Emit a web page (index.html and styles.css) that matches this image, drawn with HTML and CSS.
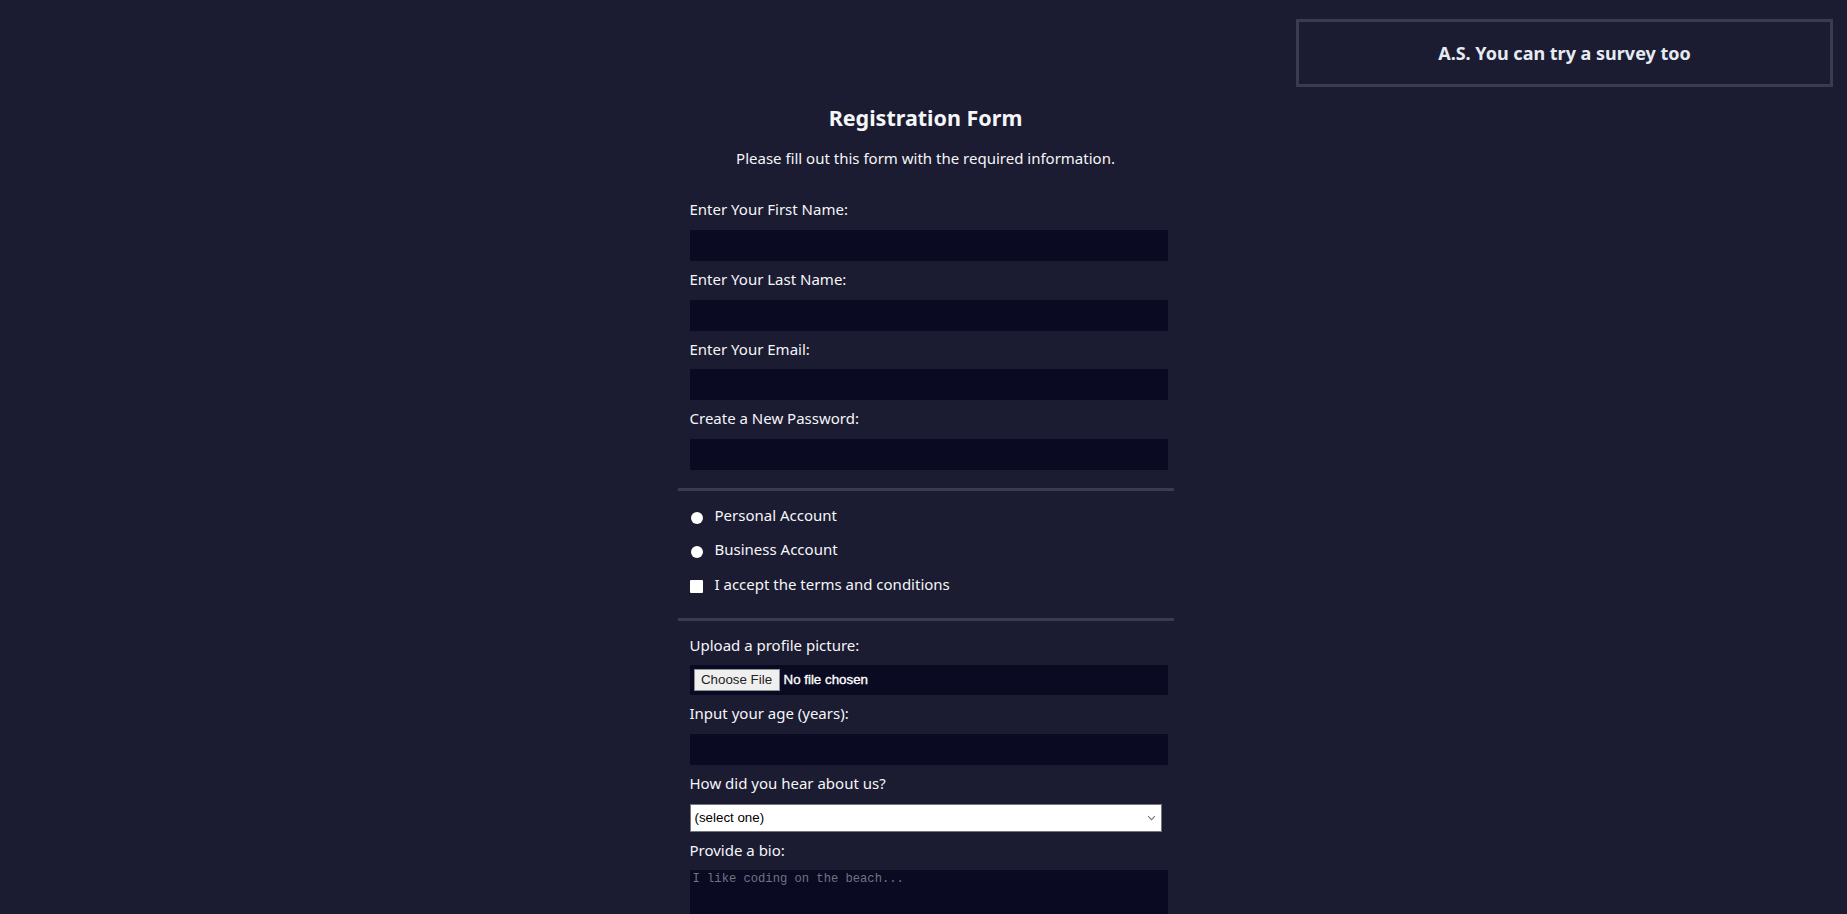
FILE: index.html
```html
<!DOCTYPE html>
<html lang="en">
<head>
<meta charset="utf-8">
<title>Registration Form</title>
<link rel="stylesheet" href="styles.css">
</head>
<body>
<header class="top">
  <div class="survey">A.S. You can try a survey too</div>
</header>
<h1 class="title">Registration Form</h1>
<p class="intro">Please fill out this form with the required information.</p>
<form class="form">
  <fieldset class="group">
    <label class="field">Enter Your First Name: <input type="text" class="control"></label>
    <label class="field">Enter Your Last Name: <input type="text" class="control"></label>
    <label class="field">Enter Your Email: <input type="email" class="control"></label>
    <label class="field">Create a New Password: <input type="password" class="control"></label>
  </fieldset>
  <fieldset class="group">
    <label class="choice"><input type="radio" name="account" class="radio"> Personal Account</label>
    <label class="choice"><input type="radio" name="account" class="radio"> Business Account</label>
    <label class="choice"><input type="checkbox" class="check"> I accept the terms and conditions</label>
  </fieldset>
  <fieldset class="group">
    <label class="field">Upload a profile picture: <input type="file" class="file"></label>
    <label class="field">Input your age (years): <input type="number" class="control"></label>
    <label class="field">How did you hear about us?
      <select class="select">
        <option value="">(select one)</option>
        <option value="1">freeCodeCamp News</option>
        <option value="2">freeCodeCamp YouTube Channel</option>
        <option value="3">freeCodeCamp Forum</option>
        <option value="4">Other</option>
      </select>
    </label>
    <label class="field">Provide a bio:
      <textarea class="bio" rows="3" cols="30" placeholder="I like coding on the beach..."></textarea>
    </label>
  </fieldset>
</form>
</body>
</html>
```

FILE: styles.css
```css
html {
  background: #1b1b32;
}

body {
  margin: 0;
  padding: 0 0 0 4px;
  background: #1b1b32;
  color: #f5f6f7;
  font-family: "Noto Sans", "Open Sans", sans-serif;
  font-size: 15px;
  line-height: 20.67px;
}

.top {
  display: flex;
  justify-content: flex-end;
  padding: 19px 14px 0 0;
}

.survey {
  box-sizing: border-box;
  width: 537px;
  height: 68px;
  border: 3px solid #3b3b4f;
  display: flex;
  align-items: center;
  justify-content: center;
  font-size: 18px;
  font-weight: 700;
  color: #e6ebf2;
}

.title {
  margin: 17px auto 0;
  text-align: center;
  font-size: 21.5px;
  line-height: 27px;
  font-weight: 700;
}

.intro {
  margin: 17px auto 17px;
  text-align: center;
}

.form {
  width: 500px;
  margin: 0 auto;
}

.group {
  margin: 0 2px;
  padding: 5.6px 12px 10px;
  border: none;
  border-bottom: 3px solid #3b3b4f;
}

.field {
  display: block;
  margin: 8px 0;
}

.control,
.file,
.bio {
  display: block;
  box-sizing: content-box;
  width: 100%;
  margin: 10px 0 0;
  padding: 1px 2px;
  background: #0a0a23;
  border: 1px solid #0a0a23;
  color: #ffffff;
}

.control {
  height: 27px;
}

.file {
  height: 26px;
  font-family: "Liberation Sans", Arial, sans-serif;
  font-size: 13.33px;
  line-height: 26px;
  -webkit-text-stroke: 0.35px #ffffff;
}

.file::file-selector-button {
  height: 22px;
  width: 86px;
  margin: 0 4px 0 1px;
  padding: 0;
  background: #efefef;
  border: 1px solid #8f8f8f;
  border-radius: 0;
  color: #222;
  -webkit-text-stroke: 0;
  font-family: "Liberation Sans", Arial, sans-serif;
  font-size: 13.33px;
}

.select {
  display: block;
  box-sizing: border-box;
  width: 100%;
  height: 28px;
  margin: 10px 0 0;
  padding: 0 24px 0 4px;
  appearance: none;
  background: #fff url("data:image/svg+xml;utf8,<svg xmlns='http://www.w3.org/2000/svg' width='9' height='6' viewBox='0 0 9 6'><path d='M1 1.2l3.5 3.5 3.5-3.5' fill='none' stroke='%23777' stroke-width='1.1'/></svg>") no-repeat right 5px center;
  border: 1px solid #767676;
  border-radius: 0;
  color: #000;
  font-family: "Liberation Sans", Arial, sans-serif;
  font-size: 13.33px;
}

.bio {
  height: 52px;
  font-family: "Liberation Mono", monospace;
  font-size: 12.15px;
  line-height: 15px;
  resize: vertical;
}

.bio::placeholder {
  color: #737382;
}

.choice {
  display: flex;
  align-items: flex-start;
  height: 26.5px;
  margin: 8px 0;
  gap: 12px;
}

.radio,
.check {
  appearance: none;
  flex: none;
  width: 12px;
  height: 12px;
  margin: 7px 0 0 1px;
  background: #ffffff;
  border: none;
}

.radio {
  border-radius: 50%;
}

.check {
  width: 13px;
  height: 13px;
  margin: 6.5px 0 0 0;
  border-radius: 1px;
}
```
